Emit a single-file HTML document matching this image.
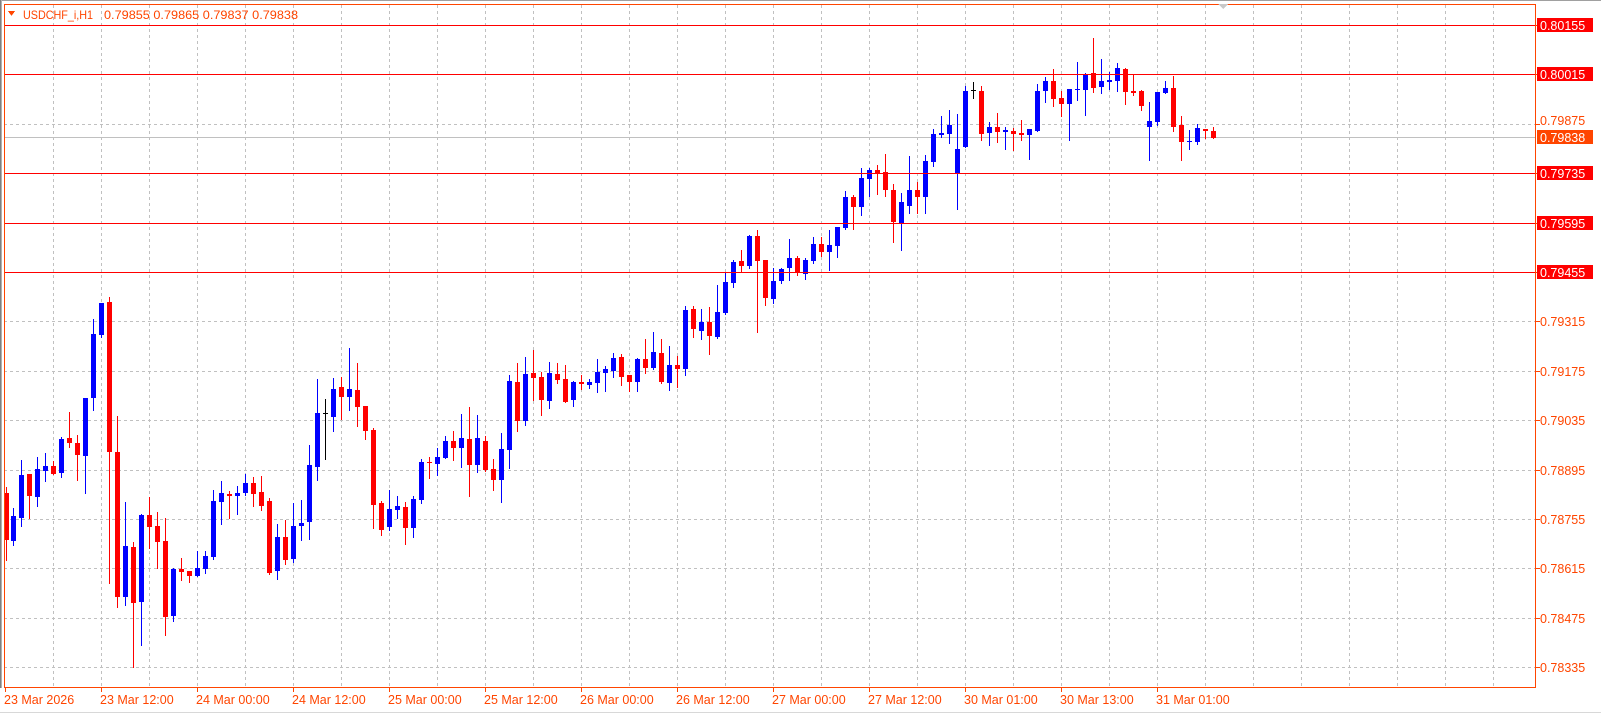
<!DOCTYPE html>
<html><head><meta charset="utf-8">
<style>
html,body{margin:0;padding:0;background:#fff;width:1601px;height:713px;overflow:hidden}
svg{display:block}
text{font-family:"Liberation Sans",sans-serif;font-size:12.5px}
</style></head>
<body>
<svg id="s" width="1601" height="713" xmlns="http://www.w3.org/2000/svg" shape-rendering="crispEdges">
<rect x="0" y="0" width="1601" height="713" fill="#fff"/>
<line x1="0" y1="0.5" x2="1601" y2="0.5" stroke="#a0a0a0"/>
<line x1="0.5" y1="0" x2="0.5" y2="713" stroke="#808080"/>
<line x1="1.5" y1="0" x2="1.5" y2="713" stroke="#b0b0b0"/>
<line x1="0" y1="712.5" x2="1601" y2="712.5" stroke="#d8d8d8"/>
<g id="grid" stroke="#c0c0c0" stroke-dasharray="3,3"></g>
<line x1="4" y1="137.5" x2="1536" y2="137.5" stroke="#c0c0c0"/>
<g id="cand"></g>
<g stroke="#ff0000">
<line x1="4" y1="25.5" x2="1536" y2="25.5"/>
<line x1="4" y1="74.5" x2="1536" y2="74.5"/>
<line x1="4" y1="173.5" x2="1536" y2="173.5"/>
<line x1="4" y1="223.5" x2="1536" y2="223.5"/>
<line x1="4" y1="272.5" x2="1536" y2="272.5"/>
</g>
<rect x="4.5" y="4.5" width="1531" height="683" fill="none" stroke="#ff4500"/>
<rect x="0" y="688" width="4" height="24" fill="#fff"/>
<polygon points="8,11 15,11 11.5,16" fill="#ff4500"/>
<text x="23" y="19" fill="#ff4500" style="font-size:12px" textLength="70" lengthAdjust="spacingAndGlyphs">USDCHF_i,H1</text>
<text x="104" y="19" fill="#ff4500" style="font-size:12px" textLength="194" lengthAdjust="spacingAndGlyphs">0.79855 0.79865 0.79837 0.79838</text>
<polygon points="1218,4 1228,4 1223,9" fill="#c8c8c8"/>
<g id="plab"></g>
<g id="tlab"></g>
</svg>
<script>
var NS="http://www.w3.org/2000/svg";
function el(p,t,a,txt){var e=document.createElementNS(NS,t);for(var k in a)e.setAttribute(k,a[k]);if(txt)e.textContent=txt;p.appendChild(e);return e;}
var grid=document.getElementById('grid');
var gy=[25,74,124,173,223,272,321,371,420,470,519,568,618,667];
gy.forEach(function(y){el(grid,'line',{x1:4,y1:y+0.5,x2:1536,y2:y+0.5});});
for(var x=53;x<1536;x+=48){el(grid,'line',{x1:x+0.5,y1:5,x2:x+0.5,y2:687});}
var d=[
[6,487,493,540,560,'r'],[13,508,516,541,545,'b'],[21,460,475,518,526,'b'],[29,474,474,496,518,'r'],[37,457,469,497,506,'b'],[45,453,466,471,481,'b'],[53,461,466,474,474,'r'],[61,437,439,473,477,'b'],[69,412,438,443,447,'r'],[77,435,443,455,480,'r'],[85,398,398,456,493,'b'],[93,319,334,398,410,'b'],[101,303,303,335,337,'b'],[109,297,302,452,583,'r'],[117,416,452,597,607,'r'],[125,502,546,597,605,'b'],[133,542,547,603,667,'r'],[141,514,515,602,645,'b'],[149,497,515,527,548,'r'],[157,512,526,542,568,'r'],[165,518,541,617,635,'r'],[173,568,569,616,621,'b'],[181,558,569,572,580,'r'],[189,571,571,576,582,'r'],[197,551,568,576,576,'b'],[205,551,556,569,573,'b'],[213,490,501,557,559,'b'],[221,481,493,502,524,'b'],[229,491,494,496,518,'r'],[237,486,493,496,514,'b'],[245,474,483,493,495,'b'],[253,477,483,494,506,'r'],[261,476,492,506,510,'r'],[269,498,501,573,574,'r'],[277,524,537,571,579,'b'],[285,520,537,560,564,'r'],[293,503,526,559,562,'b'],
[301,500,523,526,540,'b'],[309,445,465,522,539,'b'],[317,379,413,467,480,'b'],[325,399,413,413,459,'k'],[333,378,389,417,431,'b'],[341,377,387,397,419,'r'],[349,348,389,397,410,'b'],[357,363,390,407,426,'r'],[365,406,406,431,439,'r'],[373,428,430,505,528,'r'],[381,501,503,530,535,'r'],[389,490,509,527,530,'b'],[397,496,506,510,518,'b'],[405,502,507,528,544,'r'],[413,496,499,528,537,'b'],[421,459,462,500,503,'b'],[429,457,462,462,478,'r'],[437,448,457,464,475,'b'],[445,436,441,458,458,'b'],[453,431,441,448,460,'r'],[461,414,438,448,467,'b'],[469,407,439,465,496,'r'],[477,415,438,465,472,'b'],[485,436,441,470,471,'r'],[493,459,469,480,490,'r'],[501,433,449,480,502,'b'],[509,375,381,450,468,'b'],[517,363,382,421,431,'r'],[525,357,374,421,425,'b'],[533,350,373,378,400,'r'],[541,372,377,400,415,'r'],[549,362,373,401,408,'b'],[557,363,374,380,383,'r'],[565,365,379,402,402,'r'],[573,381,382,400,406,'b'],[581,375,382,384,389,'r'],[589,379,382,385,388,'b'],
[597,359,372,383,392,'b'],[605,366,369,373,391,'b'],[613,353,358,371,377,'b'],[621,354,357,377,385,'r'],[629,375,375,382,391,'r'],[637,358,359,382,391,'b'],[645,339,359,368,373,'r'],[653,332,352,368,369,'b'],[661,339,353,382,383,'r'],[669,346,365,383,390,'b'],[677,356,365,369,387,'r'],[685,306,310,369,375,'b'],[693,306,309,329,337,'r'],[701,309,322,331,339,'b'],[709,307,322,336,354,'r'],[717,285,312,337,338,'b'],[725,273,282,313,314,'b'],[733,260,262,283,287,'b'],[741,250,261,266,271,'r'],[749,235,236,266,268,'b'],[757,230,236,261,332,'r'],[765,260,260,298,305,'r'],[773,268,281,299,303,'b'],[781,268,269,281,283,'b'],[789,239,258,268,280,'b'],[797,256,258,273,275,'r'],[805,258,260,274,279,'b'],[813,237,244,261,263,'b'],[821,237,244,252,256,'r'],[829,230,245,252,270,'b'],[837,227,227,246,257,'b'],[845,191,197,228,229,'b'],[853,195,197,207,229,'r'],[861,168,178,207,215,'b'],[869,168,170,179,196,'b'],[877,165,170,173,194,'r'],[885,154,172,190,196,'r'],[893,184,190,222,242,'r'],
[901,193,202,223,250,'b'],[909,156,190,206,213,'b'],[917,182,190,197,213,'r'],[925,155,161,197,213,'b'],[933,129,134,162,166,'b'],[941,116,133,135,137,'b'],[949,110,125,134,143,'b'],[957,114,149,174,209,'b'],[965,86,91,147,147,'b'],[973,82,90,90,98,'k'],[981,86,91,134,140,'r'],[989,122,127,133,145,'b'],[997,113,127,132,142,'r'],[1005,127,130,132,149,'b'],[1013,128,131,134,150,'r'],[1021,120,133,135,140,'r'],[1029,129,129,135,159,'b'],[1037,84,91,131,131,'b'],[1045,77,81,91,102,'b'],[1053,69,81,99,106,'r'],[1061,91,98,104,116,'r'],[1069,89,89,104,140,'b'],[1077,62,89,90,100,'b'],[1085,73,74,90,115,'b'],[1093,38,73,88,92,'r'],[1101,59,81,87,93,'b'],[1109,72,80,82,89,'b'],[1117,63,68,81,91,'b'],[1125,68,69,92,104,'r'],[1133,74,91,93,95,'r'],[1141,90,91,106,110,'r'],[1149,102,121,127,160,'b'],[1157,92,92,122,125,'b'],[1165,81,88,93,93,'b'],[1173,76,88,127,131,'r'],[1181,116,125,142,160,'r'],[1189,130,141,142,149,'b'],[1197,124,128,142,144,'b'],[1205,129,129,131,138,'r'],[1213,127,131,138,138,'r']
];
var col={r:'#ff0000',b:'#0000ff',k:'#000000'};
var cg=document.getElementById('cand');
d.forEach(function(c){
 var x=c[0],f=col[c[5]];
 var x0=Math.max(5,x-2);
 el(cg,'rect',{x:Math.max(5,x),y:c[1],width:1,height:Math.max(1,c[4]-c[1]+1),fill:f});
 if(c[5]==='k'){el(cg,'rect',{x:x-2,y:c[2],width:5,height:1,fill:f});}
 else el(cg,'rect',{x:x0,y:c[2],width:x+3-x0,height:Math.max(1,c[3]-c[2]),fill:f});
});
var pl=document.getElementById('plab');
var prices=['0.80155','0.80015','0.79875','0.79735','0.79595','0.79455','0.79315','0.79175','0.79035','0.78895','0.78755','0.78615','0.78475','0.78335'];
var redIdx={0:1,1:1,3:1,4:1,5:1};
prices.forEach(function(p,i){
 var y=gy[i];
 el(pl,'line',{x1:1536,y1:y+0.5,x2:1540,y2:y+0.5,stroke:'#ff4500'});
 if(redIdx[i]){el(pl,'rect',{x:1537,y:y-7,width:56,height:14,fill:'#ff0000'});el(pl,'text',{x:1540,y:y+5,fill:'#fff'},p);}
 else if(i!==2) el(pl,'text',{x:1540,y:y+5,fill:'#ff4500'},p);
 else el(pl,'text',{x:1540,y:y+1,fill:'#ff4500'},p);
});
el(pl,'rect',{x:1537,y:130,width:56,height:14,fill:'#ff4500'});
el(pl,'text',{x:1540,y:142,fill:'#fff'},'0.79838');
var tl=document.getElementById('tlab');
var labs=['23 Mar 2026','23 Mar 12:00','24 Mar 00:00','24 Mar 12:00','25 Mar 00:00','25 Mar 12:00','26 Mar 00:00','26 Mar 12:00','27 Mar 00:00','27 Mar 12:00','30 Mar 01:00','30 Mar 13:00','31 Mar 01:00'];
labs.forEach(function(t,i){
 var x=5+96*i;
 el(tl,'line',{x1:x+0.5,y1:687,x2:x+0.5,y2:692,stroke:'#ff4500'});
 el(tl,'text',{x:x-1,y:704,fill:'#ff4500'},t);
});
</script>
</body></html>
